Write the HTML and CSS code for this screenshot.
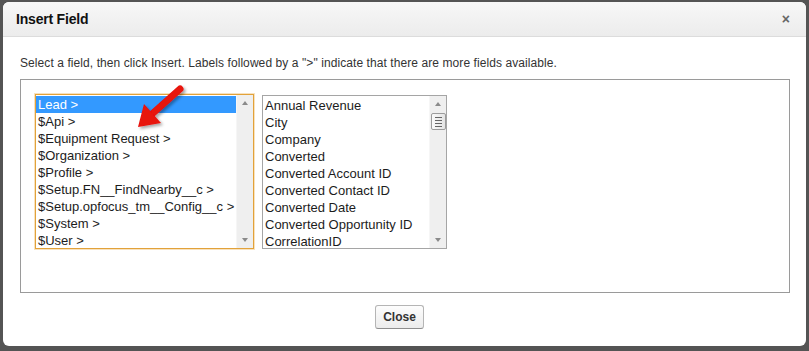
FILE: index.html
```html
<!DOCTYPE html>
<html lang="en">
<head>
  <meta charset="UTF-8" />
  <title>Insert Field</title>
  <link rel="stylesheet" href="styles.css">
</head>
<body>
  <div class="modal">
    <div class="modal-header">
      <h2>Insert Field</h2>
      <span class="close-x">&times;</span>
    </div>

    <div class="modal-body">
      <p class="hint">Select a field, then click Insert. Labels followed by a "&gt;" indicate that there are more fields available.</p>

      <div class="panel">
        <div class="listbox focused">
          <ul class="items">
            <li class="selected">Lead &gt;</li>
            <li>$Api &gt;</li>
            <li>$Equipment Request &gt;</li>
            <li>$Organization &gt;</li>
            <li>$Profile &gt;</li>
            <li>$Setup.FN__FindNearby__c &gt;</li>
            <li>$Setup.opfocus_tm__Config__c &gt;</li>
            <li>$System &gt;</li>
            <li>$User &gt;</li>
          </ul>
          <div class="scrollbar">
            <span class="arrow up"></span>
            <span class="track"></span>
            <span class="arrow down"></span>
          </div>
        </div>

        <div class="listbox fields">
          <ul class="items">
            <li>Annual Revenue</li>
            <li>City</li>
            <li>Company</li>
            <li>Converted</li>
            <li>Converted Account ID</li>
            <li>Converted Contact ID</li>
            <li>Converted Date</li>
            <li>Converted Opportunity ID</li>
            <li>CorrelationID</li>
          </ul>
          <div class="scrollbar">
            <span class="arrow up"></span>
            <span class="track"><span class="thumb"><i></i><i></i><i></i><i></i></span></span>
            <span class="arrow down"></span>
          </div>
        </div>

        <!-- annotation arrow drawn over the list -->
        <svg class="pointer" width="80" height="70" viewBox="0 0 80 70">
          <defs>
            <filter id="sh" x="-30%" y="-30%" width="160%" height="160%">
              <feDropShadow dx="2" dy="2" stdDeviation="1.5" flood-color="#000" flood-opacity="0.35"/>
            </filter>
          </defs>
          <g filter="url(#sh)">
            <line x1="60" y1="10" x2="32" y2="35" stroke="#e8120c" stroke-width="7" stroke-linecap="round"/>
            <polygon points="18,48 41,44 24,25" fill="#e8120c"/>
          </g>
        </svg>
      </div>
    </div>

    <div class="modal-footer">
      <button class="btn">Close</button>
    </div>
  </div>
</body>
</html>
```

FILE: styles.css
```css
* {
  margin: 0;
  padding: 0;
  box-sizing: border-box;
}

body {
  background: #545454;
  font-family: Arial, 'Liberation Sans', sans-serif;
  color: #222;
}

.modal {
  margin: 2px 3px 0 3px;
  height: 344px;
  background: #fff;
  border-radius: 6px;
  overflow: hidden;
  display: flex;
  flex-direction: column;
}

.modal-header {
  height: 35px;
  display: flex;
  justify-content: space-between;
  align-items: center;
  padding: 0 16px 0 13px;
  background: linear-gradient(to bottom, #f7f7f7, #ececec);
  border-bottom: 1px solid #dcdcdc;
}

.modal-header h2 {
  font-size: 14px;
  font-weight: bold;
  color: #111;
  letter-spacing: -0.2px;
}

.close-x {
  font-size: 14px;
  font-weight: bold;
  color: #666;
  line-height: 1;
}

.modal-body {
  padding: 19px 17px 0 17px;
}

.hint {
  font-size: 12px;
  color: #333;
  line-height: 14px;
  letter-spacing: 0.08px;
  margin-bottom: 9px;
}

.panel {
  position: relative;
  width: 770px;
  height: 214px;
  border: 1px solid #9a9a9a;
  padding: 14px;
  display: flex;
  align-items: flex-start;
  gap: 8px;
}

.listbox {
  display: flex;
  background: #fff;
  border: 1px solid #a5a5a5;
}

.listbox.focused {
  width: 219px;
  height: 155px;
  border: 1px solid #e2a23a;
  box-shadow: 0 0 0 1px rgba(240, 190, 110, 0.45);
}

.listbox.fields {
  width: 185px;
  height: 154px;
  margin-top: 1px;
}

.items {
  flex: 1;
  list-style: none;
  padding-top: 1px;
  overflow: hidden;
}

.items li {
  height: 17px;
  line-height: 17px;
  font-size: 13px;
  padding-left: 2px;
  color: #1c1c1c;
  white-space: nowrap;
}

.items li.selected {
  background: #3399ff;
  color: #fff;
}

.scrollbar {
  width: 17px;
  display: flex;
  flex-direction: column;
  background: #efefef;
  border-left: 1px solid #f6f6f6;
}

.arrow {
  height: 17px;
  position: relative;
}

.arrow::after {
  content: "";
  position: absolute;
  left: 5px;
  border-left: 3px solid transparent;
  border-right: 3px solid transparent;
}

.arrow.up::after {
  top: 6px;
  border-bottom: 4px solid #8a8a8a;
}

.arrow.down::after {
  top: 7px;
  border-top: 4px solid #8a8a8a;
}

.track {
  flex: 1;
}

.thumb {
  display: flex;
  flex-direction: column;
  gap: 2px;
  justify-content: center;
  align-items: center;
  width: 15px;
  height: 17px;
  margin-left: 1px;
  background: linear-gradient(to right, #fafafa, #e4e4e4);
  border: 1px solid #9c9c9c;
  border-radius: 2px;
}

.thumb i {
  display: block;
  width: 7px;
  height: 1px;
  background: #666;
}

.pointer {
  position: absolute;
  left: 99px;
  top: -1px;
}

.modal-footer {
  display: flex;
  justify-content: center;
  padding-top: 12px;
  padding-right: 10px;
}

.btn {
  width: 49px;
  height: 24px;
  font-family: Arial, 'Liberation Sans', sans-serif;
  font-size: 12px;
  font-weight: bold;
  color: #333;
  background: linear-gradient(to bottom, #fdfdfd, #ececec);
  border: 1px solid #b5b5b5;
  border-bottom-color: #8e8e8e;
  border-radius: 3px;
}
```
